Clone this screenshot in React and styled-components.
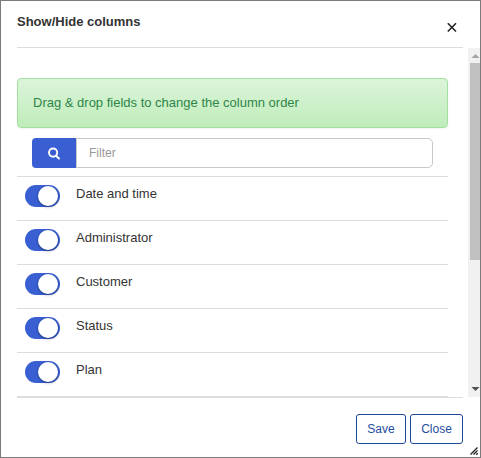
import React from 'react';
import styled, { createGlobalStyle } from 'styled-components';

const GlobalStyle = createGlobalStyle`
  *, *::before, *::after { box-sizing: border-box; }
  body { margin: 0; background: #fff; }
`;

const Dialog = styled.section`
  position: relative;
  display: flex;
  flex-direction: column;
  width: 481px;
  height: 458px;
  overflow: hidden;
  border: 1px solid #7b7b7b;
  background: #fff;
  color: #333;
  font: 13px/20px "Liberation Sans", Arial, sans-serif;
`;

const Header = styled.header`
  display: flex;
  justify-content: space-between;
  flex: none;
  height: 47px;
  margin: 0 17px 0 16px;
  border-bottom: 1px solid #ddd;
`;

const Title = styled.h1`
  margin: 11px 0 0;
  font-size: 13px;
  line-height: 20px;
  font-weight: bold;
`;

const CloseIcon = styled.button`
  width: 20px;
  height: 20px;
  margin: 17px 1px 0 0;
  padding: 0;
  border: 0;
  background: none;
  color: #333;
  svg { display: block; }
`;

const Body = styled.div`
  display: flex;
  justify-content: space-between;
  flex: none;
  height: 349px;
  padding-left: 16px;
`;

const Content = styled.div`
  width: 431px;
  padding-top: 30px;
`;

const Hint = styled.div`
  height: 50px;
  padding: 14px 15px;
  border: 1px solid #a3e0a0;
  border-radius: 4px;
  background: linear-gradient(#dcf5da, #bfecba);
  box-shadow: 0 1px 2px rgba(0, 0, 0, 0.05);
  color: #2f8548;
`;

const Filter = styled.div`
  display: flex;
  height: 30px;
  margin: 10px 15px 8px;
`;

const SearchButton = styled.button`
  display: flex;
  align-items: center;
  justify-content: center;
  width: 44px;
  padding: 0;
  border: 0;
  border-radius: 4px 0 0 4px;
  background: #395fd3;
`;

const FilterInput = styled.input`
  flex: 1;
  min-width: 0;
  padding: 0 12px 1px;
  border: 1px solid #c8c8c8;
  border-radius: 0 5px 5px 0;
  outline: 0;
  font: 12px "Liberation Sans", Arial, sans-serif;
  color: #333;
  &::placeholder { color: #999; opacity: 1; }
`;

const Rows = styled.ul`
  margin: 0;
  padding: 0;
  list-style: none;
  border-bottom: 1px solid #ddd;
`;

const Row = styled.li`
  display: flex;
  height: 44px;
  padding: 8px 8px 0;
  border-top: 1px solid #ddd;
`;

const Toggle = styled.span`
  display: flex;
  justify-content: ${({ $on }) => ($on ? 'flex-end' : 'flex-start')};
  width: 35px;
  height: 22px;
  margin-right: 16px;
  padding: 1px 2px;
  border-radius: 11px;
  background: ${({ $on }) => ($on ? '#395fd3' : '#ccc')};
  &::after {
    content: '';
    width: 20px;
    height: 20px;
    border-radius: 50%;
    background: #fff;
    box-shadow: 0 1px 3px rgba(0, 0, 0, 0.4);
  }
`;

const Label = styled.span`
  margin-top: -1px;
`;

const Scrollbar = styled.div`
  display: flex;
  flex-direction: column;
  width: 12px;
  height: 349px;
  padding-left: 2px;
  background: #f1f1f1;
`;

const Thumb = styled.div`
  height: 197px;
  margin-bottom: auto;
  background: #c1c1c1;
`;

const Arrow = styled.svg`
  display: block;
  flex: none;
  width: 10px;
  height: 15px;
  fill: ${({ $active }) => ($active ? '#505050' : '#a3a3a3')};
`;

const Footer = styled.footer`
  display: flex;
  justify-content: flex-end;
  gap: 4px;
  flex: none;
  height: 60px;
  margin: -1px 17px 0 16px;
  padding-top: 17px;
`;

const FooterRule = styled.div`
  flex: none;
  height: 1px;
  margin: 0 17px 0 16px;
  background: #ddd;
`;

const Button = styled.button`
  width: ${({ $wide }) => ($wide ? '53px' : '50px')};
  height: 30px;
  padding: 0;
  border: 1px solid #1f4799;
  border-radius: 3px;
  background: #fff;
  color: #1f4d9f;
  font: 12px "Liberation Sans", Arial, sans-serif;
`;

const ResizeGrip = styled.svg`
  position: absolute;
  right: 2px;
  bottom: 2px;
  width: 8px;
  height: 8px;
`;

const columns = ['Date and time', 'Administrator', 'Customer', 'Status', 'Plan'];

export default function App() {
  return (
    <>
      <GlobalStyle />
      <Dialog role="dialog" aria-label="Show/Hide columns">
        <Header>
          <Title>Show/Hide columns</Title>
          <CloseIcon aria-label="Close dialog">
            <svg width="20" height="20" viewBox="0 0 20 20" fill="none" stroke="#222" strokeWidth="1.6">
              <path d="M5.8 5.3l8.2 8.2M14 5.3l-8.2 8.2" />
            </svg>
          </CloseIcon>
        </Header>
        <Body>
          <Content>
            <Hint>Drag &amp; drop fields to change the column order</Hint>
            <Filter>
              <SearchButton aria-label="Search">
                <svg width="12" height="13" viewBox="0 0 12 13" fill="none" stroke="#fff">
                  <circle cx="5.1" cy="5.6" r="4.1" strokeWidth="1.9" />
                  <path d="M8.1 8.7l2.8 2.8" strokeWidth="2" strokeLinecap="round" />
                </svg>
              </SearchButton>
              <FilterInput placeholder="Filter" />
            </Filter>
            <Rows>
              {columns.map((name) => (
                <Row key={name}>
                  <Toggle $on role="switch" aria-checked="true" aria-label={name} />
                  <Label>{name}</Label>
                </Row>
              ))}
            </Rows>
          </Content>
          <Scrollbar>
            <Arrow viewBox="0 0 10 15"><path d="M1.5 10L5.5 6l4 4z" /></Arrow>
            <Thumb />
            <Arrow viewBox="0 0 10 15" $active><path d="M1.5 5l4 4 4-4z" /></Arrow>
          </Scrollbar>
        </Body>
        <FooterRule />
        <Footer>
          <Button>Save</Button>
          <Button $wide>Close</Button>
        </Footer>
        <ResizeGrip viewBox="0 0 8 8" stroke="#222" strokeWidth="1.3">
          <path d="M0.5 7.5l7-7M3.5 7.5l4-4M6.2 7.8l1.6-1.6" />
        </ResizeGrip>
      </Dialog>
    </>
  );
}
